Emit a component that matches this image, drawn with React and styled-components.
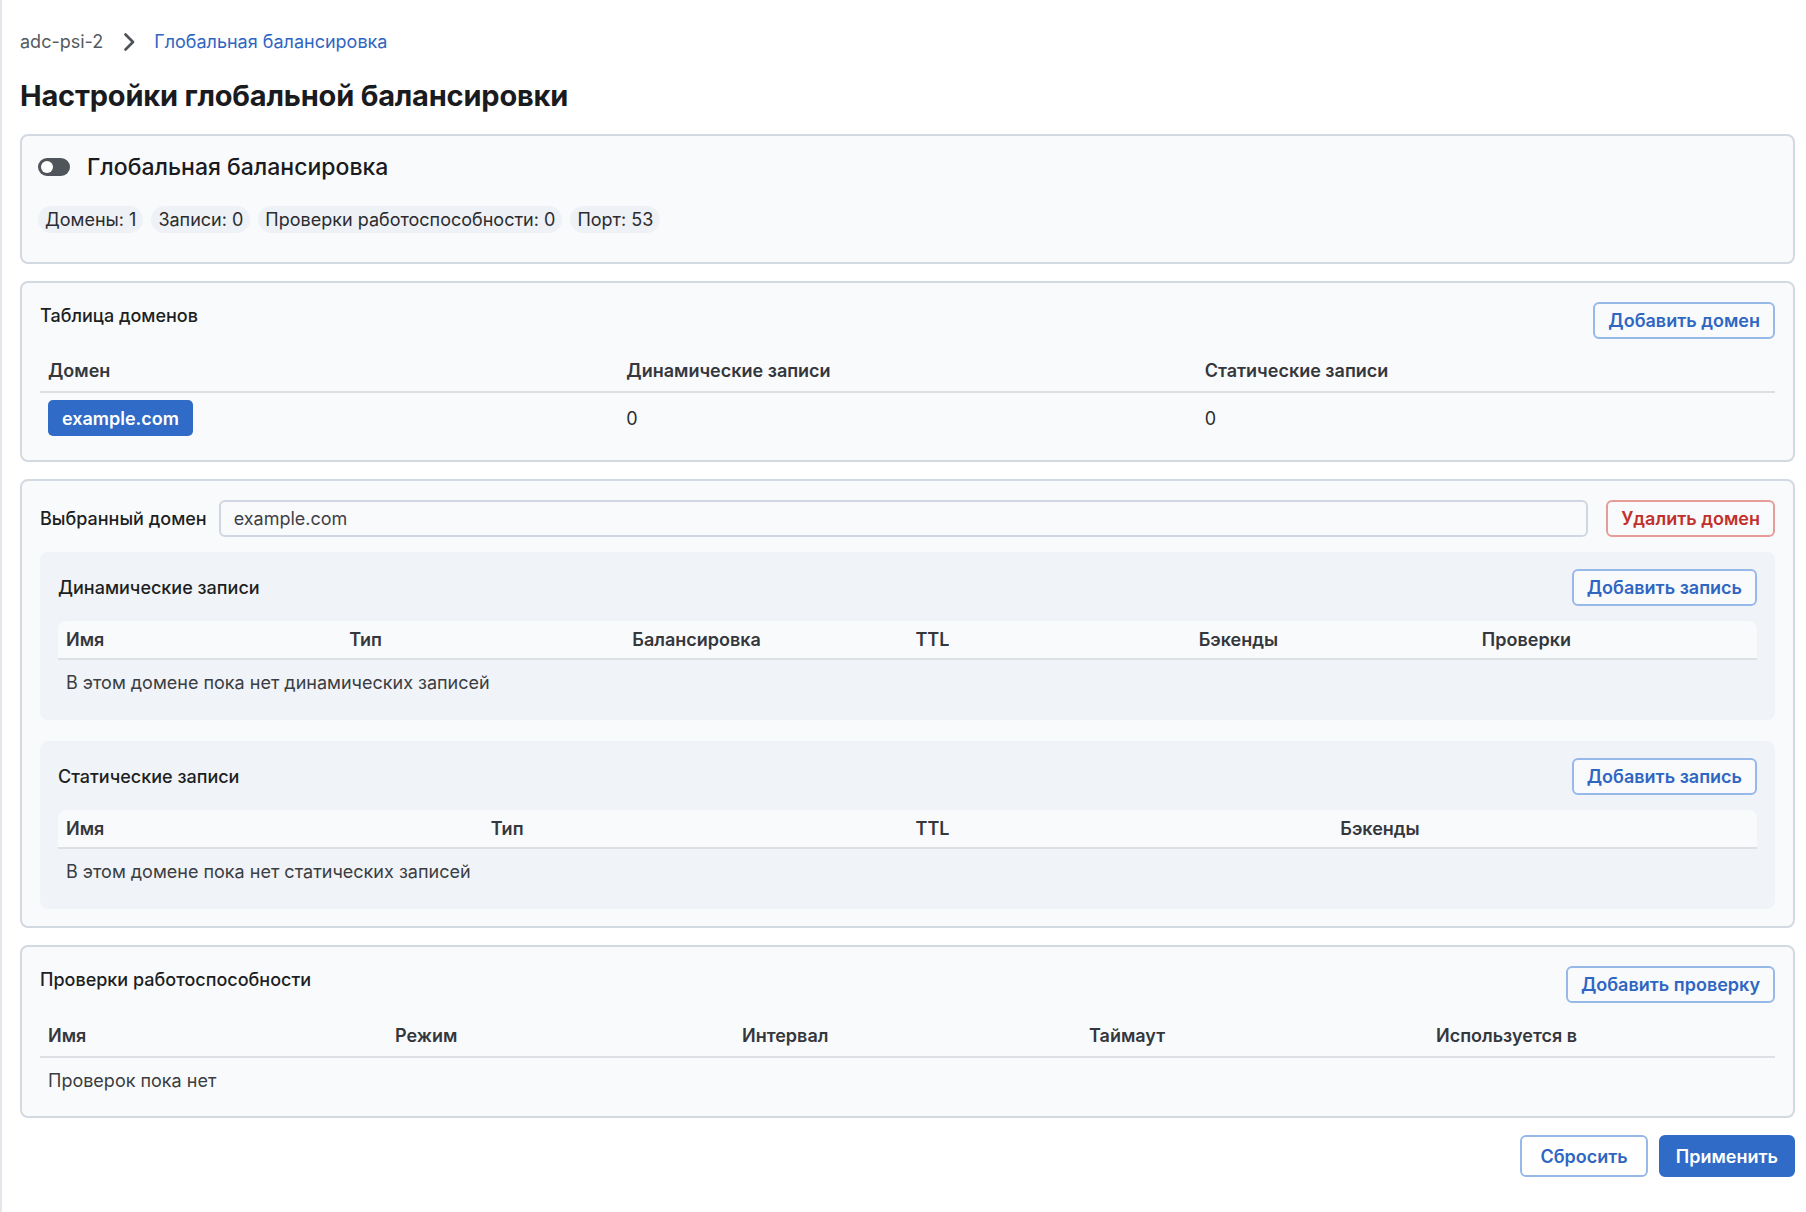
import React from "react";
import styled, { createGlobalStyle } from "styled-components";

const Global = createGlobalStyle`
  html, body { margin: 0; padding: 0; background: #ffffff; }
  body { font-family: Inter, "Noto Sans", "Liberation Sans", sans-serif; color: #1d1f23; }
  * { box-sizing: border-box; }
`;

const Page = styled.div`
  min-height: 1212px;
  border-left: 2px solid #e3e6ea;
  padding: 29px 11px 30px 18px;
  display: flex;
  flex-direction: column;
`;

const Crumbs = styled.nav`
  display: flex;
  align-items: center;
  gap: 19px;
  font-size: 18px;
  line-height: 26px;
`;

const CrumbPlain = styled.span`
  color: #555a61;
`;

const CrumbLink = styled.span`
  color: #2f66c2;
`;

const Title = styled.h1`
  margin: 24px 0 21px;
  font-size: 29px;
  line-height: 34px;
  font-weight: 700;
  color: #1a1b1e;
  letter-spacing: -0.2px;
`;

const Stack = styled.div`
  display: flex;
  flex-direction: column;
  gap: 17px;
`;

const Card = styled.section`
  background: #f9fafc;
  border: 2px solid #d3d9e1;
  border-radius: 8px;
  padding: ${(p) => p.$pad || "18px"};
  display: flex;
  flex-direction: column;
`;

const ToggleRow = styled.div`
  display: flex;
  align-items: center;
  gap: 17px;
  height: 32px;
`;

const Toggle = styled.span`
  position: relative;
  width: 32px;
  height: 18px;
  border-radius: 9px;
  background: #50555c;
  flex-shrink: 0;
  &::after {
    content: "";
    position: absolute;
    left: 3px;
    top: 3px;
    width: 12px;
    height: 12px;
    border-radius: 50%;
    background: #ffffff;
  }
`;

const ToggleLabel = styled.span`
  font-size: 23px;
  font-weight: 500;
  color: #1a1b1e;
`;

const Chips = styled.div`
  display: flex;
  gap: 8px;
  margin: 23px 0 11px;
`;

const Chip = styled.span`
  background: #eef1f5;
  border-radius: 14px;
  padding: 0 7px;
  height: 27px;
  line-height: 27px;
  font-size: 18px;
  color: #2a2c30;
`;

const HeadRow = styled.div`
  display: flex;
  align-items: center;
  justify-content: space-between;
  height: 37px;
`;

const SectionTitle = styled.h3`
  margin: 0;
  font-size: 18px;
  font-weight: 500;
  color: #1d1f23;
  transform: translateY(${(p) => (p.$raised ? -5 : 0)}px);
`;

const Button = styled.button`
  font-family: inherit;
  font-size: 18px;
  font-weight: 600;
  height: ${(p) => p.$h || 37}px;
  padding: 0 ${(p) => p.$px || 13}px;
  border-radius: 6px;
  cursor: pointer;
  white-space: nowrap;
  border: 2px solid
    ${(p) => (p.$variant === "danger" ? "#e69d99" : p.$variant === "primary" ? "#2f6bc7" : "#97b9ea")};
  color: ${(p) => (p.$variant === "danger" ? "#c1302a" : p.$variant === "primary" ? "#ffffff" : "#2f66c2")};
  background: ${(p) => (p.$variant === "primary" ? "#2f6bc7" : p.$variant === "white" ? "#ffffff" : "#f9fafc")};
`;

const Table = styled.div`
  display: grid;
  grid-template-columns: repeat(${(p) => p.$cols}, 1fr);
  margin-top: ${(p) => p.$mt || 12}px;
`;

const Th = styled.div`
  font-size: 18px;
  font-weight: 600;
  color: #34373c;
  padding: 0 8px;
  height: ${(p) => p.$h || 43}px;
  display: flex;
  align-items: center;
  border-bottom: 2px solid #dcdfe4;
  background: ${(p) => (p.$light ? "#f9fafc" : "transparent")};
  &:first-child { border-top-left-radius: 8px; }
  &:nth-child(${(p) => p.$cols}) { border-top-right-radius: 8px; }
`;

const Td = styled.div`
  font-size: 18px;
  color: #2a2c30;
  padding: 7px 8px 10px;
  display: flex;
  align-items: center;
`;

const Empty = styled.div`
  grid-column: 1 / -1;
  font-size: 18px;
  color: #3a3d42;
  padding: 0 8px;
  height: 45px;
  display: flex;
  align-items: center;
`;

const DomainTag = styled.span`
  background: #2f6bc7;
  color: #ffffff;
  font-size: 18px;
  font-weight: 600;
  border-radius: 5px;
  height: 36px;
  padding: 0 14px;
  display: inline-flex;
  align-items: center;
`;

const FieldRow = styled.div`
  display: flex;
  align-items: center;
  gap: 12px;
  height: 37px;
`;

const FieldLabel = styled.label`
  font-size: 18px;
  font-weight: 500;
  color: #1d1f23;
  white-space: nowrap;
`;

const Input = styled.input`
  flex: 1;
  height: 37px;
  border: 2px solid #d0d7e0;
  border-radius: 6px;
  background: #f9fafc;
  font-family: inherit;
  font-size: 18px;
  color: #3d4046;
  padding: 0 13px;
  margin-right: 6px;
  outline: none;
`;

const SubPanel = styled.div`
  background: #f0f3f7;
  border-radius: 8px;
  padding: 17px 18px 15px;
  margin-top: ${(p) => p.$mt}px;
  display: flex;
  flex-direction: column;
`;

const Footer = styled.div`
  display: flex;
  justify-content: flex-end;
  gap: 11px;
  margin-top: 17px;
`;

const Chevron = () => (
  <svg width="13" height="20" viewBox="0 0 13 20" fill="none">
    <path d="M3.5 2.5l7.5 7.5-7.5 7.5" stroke="#4d5158" strokeWidth="2.7" strokeLinecap="round" strokeLinejoin="round" />
  </svg>
);

const HeaderCells = ({ cols, light, h }) =>
  cols.map((c) => (
    <Th key={c} $light={light} $cols={cols.length} $h={h}>
      {c}
    </Th>
  ));

export default function App() {
  const dyn = ["Имя", "Тип", "Балансировка", "TTL", "Бэкенды", "Проверки"];
  const stat = ["Имя", "Тип", "TTL", "Бэкенды"];
  const checks = ["Имя", "Режим", "Интервал", "Таймаут", "Используется в"];
  return (
    <>
      <Global />
      <Page>
        <Crumbs>
          <CrumbPlain>adc-psi-2</CrumbPlain>
          <Chevron />
          <CrumbLink>Глобальная балансировка</CrumbLink>
        </Crumbs>
        <Title>Настройки глобальной балансировки</Title>
        <Stack>
          <Card $pad="15px 16px 18px">
            <ToggleRow>
              <Toggle />
              <ToggleLabel>Глобальная балансировка</ToggleLabel>
            </ToggleRow>
            <Chips>
              <Chip>Домены: 1</Chip>
              <Chip>Записи: 0</Chip>
              <Chip>Проверки работоспособности: 0</Chip>
              <Chip>Порт: 53</Chip>
            </Chips>
          </Card>

          <Card $pad="19px 18px 14px">
            <HeadRow>
              <SectionTitle $raised>Таблица доменов</SectionTitle>
              <Button>Добавить домен</Button>
            </HeadRow>
            <Table $cols={3} $mt={11}>
              <HeaderCells cols={["Домен", "Динамические записи", "Статические записи"]} />
              <Td>
                <DomainTag>example.com</DomainTag>
              </Td>
              <Td>0</Td>
              <Td>0</Td>
            </Table>
          </Card>

          <Card $pad="19px 18px 17px">
            <FieldRow>
              <FieldLabel>Выбранный домен</FieldLabel>
              <Input defaultValue="example.com" readOnly />
              <Button $variant="danger">Удалить домен</Button>
            </FieldRow>
            <SubPanel $mt={15}>
              <HeadRow>
                <SectionTitle>Динамические записи</SectionTitle>
                <Button>Добавить запись</Button>
              </HeadRow>
              <Table $cols={6} $mt={15}>
                <HeaderCells cols={dyn} light h={39} />
                <Empty>В этом домене пока нет динамических записей</Empty>
              </Table>
            </SubPanel>
            <SubPanel $mt={21}>
              <HeadRow>
                <SectionTitle>Статические записи</SectionTitle>
                <Button>Добавить запись</Button>
              </HeadRow>
              <Table $cols={4} $mt={15}>
                <HeaderCells cols={stat} light h={39} />
                <Empty>В этом домене пока нет статических записей</Empty>
              </Table>
            </SubPanel>
          </Card>

          <Card $pad="19px 18px 13px">
            <HeadRow>
              <SectionTitle $raised>Проверки работоспособности</SectionTitle>
              <Button>Добавить проверку</Button>
            </HeadRow>
            <Table $cols={5} $mt={12}>
              <HeaderCells cols={checks} />
              <Empty>Проверок пока нет</Empty>
            </Table>
          </Card>
        </Stack>
        <Footer>
          <Button $h={42} $px={18} $variant="white">Сбросить</Button>
          <Button $h={42} $px={15} $variant="primary">Применить</Button>
        </Footer>
      </Page>
    </>
  );
}
